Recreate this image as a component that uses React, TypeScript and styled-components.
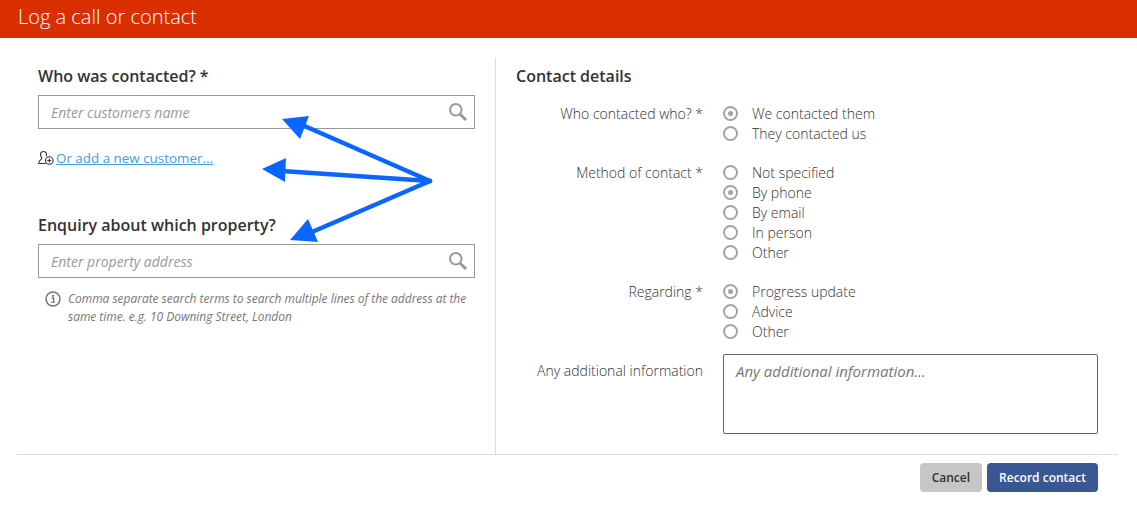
import styled, { createGlobalStyle } from "styled-components";

const GlobalStyle = createGlobalStyle`
  html, body {
    margin: 0;
    padding: 0;
    background: #fff;
    font-family: "Open Sans", "Liberation Sans", sans-serif;
  }
`;

const S = {
  Page: styled.div`
    position: relative;
    width: 1137px;
    height: 511px;
    overflow: hidden;
    background: #fff;
  `,
  Header: styled.div`
    height: 38px;
    box-sizing: border-box;
    padding-left: 18px;
    background: #d92e00;
    color: #fff;
    font-size: 20px;
    font-weight: 300;
    line-height: 34px;
  `,
  Body: styled.div`
    display: flex;
    height: 396px;
    margin: 20px 19px 0 17px;
    border-bottom: 1px solid #dddddd;
    box-sizing: content-box;
  `,
  LeftColumn: styled.div`
    width: 479px;
    box-sizing: border-box;
    padding: 7px 20px 0 21px;
    border-right: 1px solid #dddddd;
  `,
  RightColumn: styled.div`
    flex: 1;
    padding: 7px 20px 0 20px;
  `,
  SectionTitle: styled.div`
    font-size: 16px;
    font-weight: 600;
    line-height: 22px;
    color: #333;
  `,
  DetailsTitle: styled.div`
    margin-bottom: 17px;
    font-size: 16px;
    font-weight: 600;
    line-height: 22px;
    color: #333;
  `,
  SearchField: styled.div`
    display: flex;
    align-items: center;
    justify-content: space-between;
    height: 34px;
    margin-top: 8px;
    box-sizing: border-box;
    padding: 0 6px 0 12px;
    border: 1px solid #999;
    font-size: 14px;
    font-style: italic;
    color: #999;
  `,
  AddRow: styled.div`
    display: flex;
    align-items: center;
    gap: 2px;
    height: 20px;
    margin: 19px 0 46px;
    font-size: 13.4px;
  `,
  AddLink: styled.a`
    color: #4a9bdc;
    text-decoration: underline;
  `,
  Hint: styled.div`
    display: flex;
    gap: 7px;
    margin: 12px 0 0 7px;
    font-size: 12px;
    font-style: italic;
    line-height: 18px;
    color: #777;
    letter-spacing: -0.03px;
  `,
  HintIcon: styled.svg`
    flex: none;
    margin-top: 1px;
  `,
  FormRow: styled.div<{ $gap: number }>`
    display: flex;
    margin-bottom: ${(p) => p.$gap}px;
  `,
  Label: styled.div<{ $offset?: number }>`
    width: 187px;
    padding-top: ${(p) => p.$offset ?? 0}px;
    text-align: right;
    font-size: 14px;
    font-weight: 300;
    line-height: 20px;
    color: #333;
  `,
  Options: styled.div`
    display: flex;
    flex-direction: column;
    margin-left: 20px;
  `,
  Option: styled.div`
    display: flex;
    align-items: center;
    gap: 14px;
    height: 20px;
    font-size: 14px;
    font-weight: 300;
    color: #333;
  `,
  OptionText: styled.span`
    padding-bottom: 2px;
  `,
  Radio: styled.span<{ $checked?: boolean }>`
    display: flex;
    align-items: center;
    justify-content: center;
    width: 15px;
    height: 15px;
    margin-top: -1px;
    box-sizing: border-box;
    border: 2px solid #a3a3a3;
    border-radius: 50%;
    &::after {
      content: "";
      width: 5px;
      height: 5px;
      border-radius: 50%;
      background: ${(p) => (p.$checked ? "#a3a3a3" : "transparent")};
    }
  `,
  TextArea: styled.div`
    width: 375px;
    height: 80px;
    margin-left: 20px;
    box-sizing: border-box;
    padding: 6px 12px;
    border: 1px solid #666;
    border-radius: 2px;
    font-size: 15px;
    font-style: italic;
    line-height: 20px;
    color: #777;
  `,
  Footer: styled.div`
    display: flex;
    justify-content: flex-end;
    gap: 5px;
    margin: 8px 39px 0 0;
  `,
  Button: styled.button<{ $primary?: boolean }>`
    height: 29px;
    padding: 0 12px;
    border: 0;
    border-radius: 4px;
    background: ${(p) => (p.$primary ? "#3a5795" : "#c6c6c6")};
    color: ${(p) => (p.$primary ? "#fff" : "#333")};
    font-family: inherit;
    font-size: 12px;
    font-weight: 600;
  `,
  Arrows: styled.svg`
    position: absolute;
    left: 0;
    top: 0;
    pointer-events: none;
  `,
};

function SearchIcon() {
  return (
    <svg width="20" height="20" viewBox="0 0 20 20" fill="none" stroke="#999">
      <circle cx="7.8" cy="7.8" r="5.8" strokeWidth="2" />
      <path d="M12.2 12.2L18 18" strokeWidth="3" />
    </svg>
  );
}

function AddCustomerIcon() {
  return (
    <svg width="16" height="16" viewBox="0 0 16 16" fill="none" stroke="#333" strokeWidth="1.1">
      <path d="M5.5 1.5c-2 0-3 1.3-3 3.2 0 1.4.6 2.4 1.3 3.2 0 1-.8 1.6-2.3 3.1-.6.7-.8 1.7-.8 2.5h7" />
      <path d="M5.5 1.5c2 0 3 1.3 3 3.2 0 .6-.1 1.1-.3 1.6" />
      <circle cx="11.3" cy="10.5" r="3.8" />
      <path d="M11.3 8.5v4M9.3 10.5h4" />
    </svg>
  );
}

function InfoIcon() {
  return (
    <S.HintIcon width="16" height="16" viewBox="0 0 16 16" fill="none">
      <circle cx="8" cy="8" r="7" stroke="#777" strokeWidth="1.5" />
      <circle cx="8" cy="4.8" r="1.1" fill="#777" />
      <path d="M6.6 7h2v4.2M6.4 11.4h3.3" stroke="#777" strokeWidth="1.3" />
    </S.HintIcon>
  );
}

function Arrows() {
  return (
    <S.Arrows width="1137" height="511" viewBox="0 0 1137 511">
      <g stroke="#0a66ff" strokeWidth="4.5" fill="none" strokeLinecap="round">
        <path d="M430 181L300 124" />
        <path d="M430 181L282 171" />
        <path d="M430 181L312 232" />
      </g>
      <g fill="#0a66ff">
        <path d="M282 119L309 116L300 139Z" />
        <path d="M262 169L286 158L285 182Z" />
        <path d="M290 240L308 219L318 242Z" />
      </g>
    </S.Arrows>
  );
}

type Choice = { text: string; checked?: boolean };

function RadioRow({ label, options, gap }: { label: string; options: Choice[]; gap: number }) {
  return (
    <S.FormRow $gap={gap}>
      <S.Label>{label}</S.Label>
      <S.Options>
        {options.map((o) => (
          <S.Option key={o.text}>
            <S.Radio $checked={o.checked} />
            <S.OptionText>{o.text}</S.OptionText>
          </S.Option>
        ))}
      </S.Options>
    </S.FormRow>
  );
}

export default function App() {
  return (
    <S.Page>
      <GlobalStyle />
      <S.Header>Log a call or contact</S.Header>
      <S.Body>
        <S.LeftColumn>
          <S.SectionTitle>Who was contacted? *</S.SectionTitle>
          <S.SearchField>
            Enter customers name
            <SearchIcon />
          </S.SearchField>
          <S.AddRow>
            <AddCustomerIcon />
            <S.AddLink>Or add a new customer...</S.AddLink>
          </S.AddRow>
          <S.SectionTitle>Enquiry about which property?</S.SectionTitle>
          <S.SearchField>
            Enter property address
            <SearchIcon />
          </S.SearchField>
          <S.Hint>
            <InfoIcon />
            <div>
              Comma separate search terms to search multiple lines of the address at the same time. e.g. 10 Downing
              Street, London
            </div>
          </S.Hint>
        </S.LeftColumn>
        <S.RightColumn>
          <S.DetailsTitle>Contact details</S.DetailsTitle>
          <RadioRow
            label="Who contacted who? *"
            gap={19}
            options={[{ text: "We contacted them", checked: true }, { text: "They contacted us" }]}
          />
          <RadioRow
            label="Method of contact *"
            gap={19}
            options={[
              { text: "Not specified" },
              { text: "By phone", checked: true },
              { text: "By email" },
              { text: "In person" },
              { text: "Other" },
            ]}
          />
          <RadioRow
            label="Regarding *"
            gap={12}
            options={[{ text: "Progress update", checked: true }, { text: "Advice" }, { text: "Other" }]}
          />
          <S.FormRow $gap={0}>
            <S.Label $offset={7}>Any additional information</S.Label>
            <S.TextArea>Any additional information...</S.TextArea>
          </S.FormRow>
        </S.RightColumn>
      </S.Body>
      <S.Footer>
        <S.Button>Cancel</S.Button>
        <S.Button $primary>Record contact</S.Button>
      </S.Footer>
      <Arrows />
    </S.Page>
  );
}
